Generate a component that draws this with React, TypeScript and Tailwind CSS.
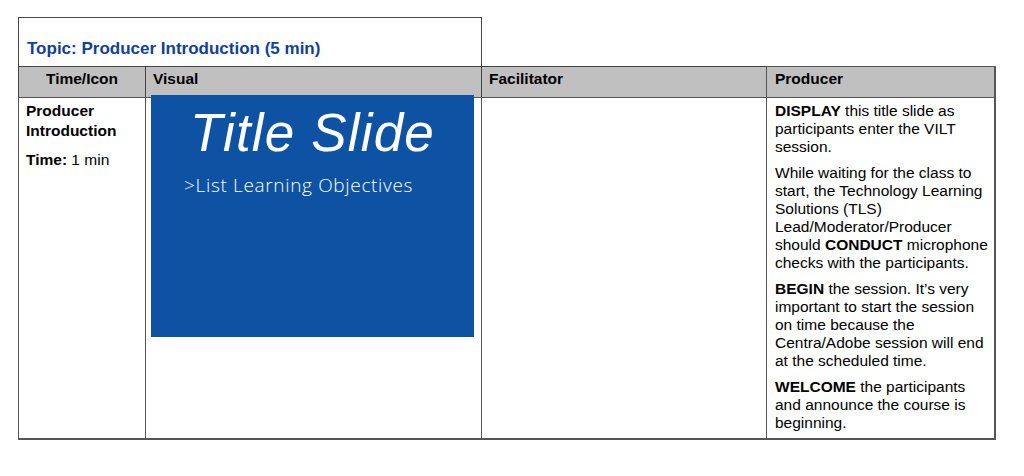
import React from "react";

const producerNotes: { bold?: string; lines: string[] }[] = [
  { bold: "DISPLAY", lines: [" this title slide as", "participants enter the VILT", "session."] },
  {
    lines: [
      "While waiting for the class to",
      "start, the Technology Learning",
      "Solutions (TLS)",
      "Lead/Moderator/Producer",
      "should |CONDUCT| microphone",
      "checks with the participants.",
    ],
  },
  {
    bold: "BEGIN",
    lines: [" the session. It\u2019s very", "important to start the session", "on time because the", "Centra/Adobe session will end", "at the scheduled time."],
  },
  { bold: "WELCOME", lines: [" the participants", "and announce the course is", "beginning."] },
];

// "a |b| c" -> b is bold
const renderLine = (line: string) =>
  line.split("|").map((part, i) => (i % 2 === 1 ? <b key={i}>{part}</b> : <span key={i}>{part}</span>));

const App = () => {
  return (
    <div className="w-[1024px] h-[476px] bg-white pl-[18px] pt-[17px] font-['Liberation_Sans',Arial,sans-serif] text-black">
      <div className="w-[464px] h-[49px] border border-b-0 border-[#444] pl-[8px] pt-[21px] text-[17px] leading-[20px] font-bold text-[#103f9c]">
        Topic: Producer Introduction (5 min)
      </div>

      <div className="grid grid-cols-[127px_336px_285px_230px] w-[978px] text-[15.5px]">
        {/* header row */}
        <div className="h-[31px] bg-[#c0c0c0] border-t border-l border-[#444] pt-[3px] leading-[18px] font-bold text-center">
          Time/Icon
        </div>
        <div className="h-[31px] bg-[#c0c0c0] border-t border-l border-[#444] pt-[3px] pl-[7px] leading-[18px] font-bold">
          Visual
        </div>
        <div className="h-[31px] bg-[#c0c0c0] border-t border-l border-[#444] pt-[3px] pl-[7px] leading-[18px] font-bold">
          Facilitator
        </div>
        <div className="h-[31px] bg-[#c0c0c0] border-t border-l border-r-2 border-[#555] pt-[3px] pl-[8px] leading-[18px] font-bold">
          Producer
        </div>

        {/* body row */}
        <div className="h-[343px] border-t border-l border-b-2 border-[#555] pl-[7px] pt-[3px] leading-[20px]">
          <div className="font-bold">
            Producer
            <br />
            Introduction
          </div>
          <div className="mt-[9px]">
            <b>Time:</b> 1 min
          </div>
        </div>
        <div className="h-[343px] border-t border-l border-b-2 border-[#555] pl-[5px]">
          <div className="relative -mt-[3px] w-[323px] h-[242px] bg-[#0e52a3] text-white">
            <div className="pt-[11px] text-center text-[53px] leading-[53px] italic tracking-[0.022em]">Title Slide</div>
            <div className="mt-[17px] pl-[33px] text-[19px] leading-[18px] tracking-[0.035em] font-['Open_Sans',sans-serif] font-light">
              &gt;List Learning Objectives
            </div>
          </div>
        </div>
        <div className="h-[343px] border-t border-l border-b-2 border-[#555]" />
        <div className="h-[343px] border-t border-l border-r-2 border-b-2 border-[#555] pl-[8px] pt-[4px] leading-[18px]">
          {producerNotes.map((para, i) => (
            <div key={i} className={i > 0 ? "mt-[8px]" : ""}>
              {para.lines.map((line, j) => (
                <div key={j} className="whitespace-nowrap">
                  {j === 0 && para.bold ? <b>{para.bold}</b> : null}
                  {renderLine(line)}
                </div>
              ))}
            </div>
          ))}
        </div>
      </div>
    </div>
  );
};

export default App;
